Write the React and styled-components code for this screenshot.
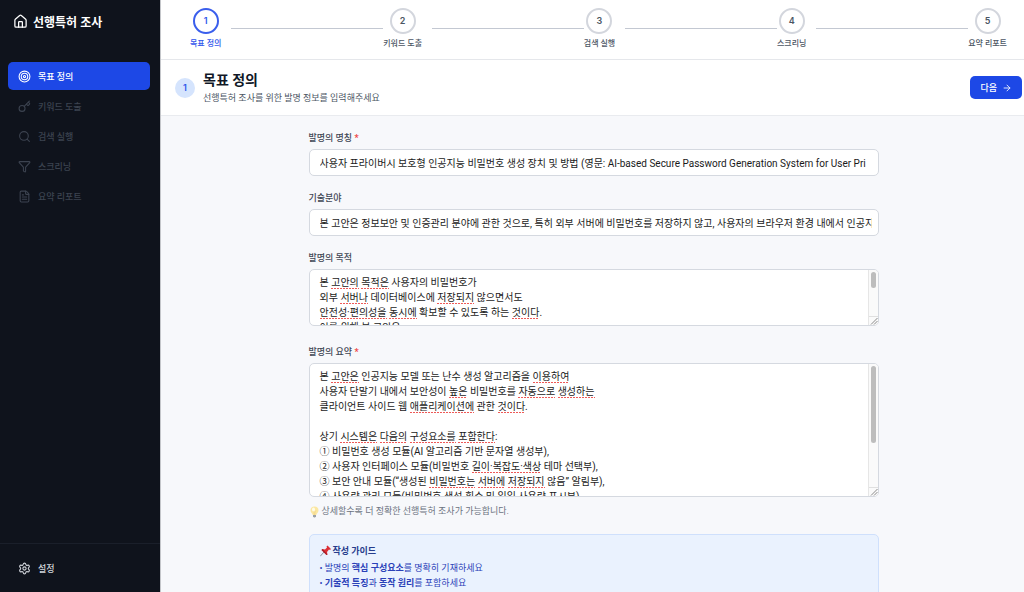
import React, { useLayoutEffect, useRef, useState } from "react";
import styled, { createGlobalStyle, css } from "styled-components";
import {
  ArrowRight,
  FileText,
  Funnel,
  House,
  Key,
  Search,
  Settings,
  Target,
} from "lucide-react";

const GlobalStyle = createGlobalStyle`
  * {
    box-sizing: border-box;
  }
  body {
    margin: 0;
    font-family: Roboto, "Noto Sans CJK KR", sans-serif;
    -webkit-font-smoothing: antialiased;
  }
  h1, h2, h3, p, ul, ol {
    margin: 0;
    padding: 0;
  }
  ul, ol {
    list-style: none;
  }
  button, input, textarea {
    font-family: inherit;
  }
`;

const steps = [
  { id: 1, label: "목표 정의", icon: Target },
  { id: 2, label: "키워드 도출", icon: Key },
  { id: 3, label: "검색 실행", icon: Search },
  { id: 4, label: "스크리닝", icon: Funnel },
  { id: 5, label: "요약 리포트", icon: FileText },
];

// words in [brackets] get the spelling underline
const purposeText = `본 [고안의] [목적은] 사용자의 비밀번호가
외부 [서버나] 데이터베이스에 [저장되지] 않으면서도
[안전성·편의성을] [동시에] 확보할 수 있도록 하는 [것이다].
이를 위해 본 고안은




`;

const summaryText = `본 [고안은] 인공지능 모델 또는 난수 생성 알고리즘을 [이용하여]
사용자 단말기 내에서 보안성이 [높은] 비밀번호를 [자동으로] [생성하는]
클라이언트 사이드 웹 [애플리케이션에] 관한 [것이다].

상기 [시스템은] [다음의] [구성요소를] [포함한다]:
① 비밀번호 생성 모듈(AI 알고리즘 기반 문자열 생성부),
② 사용자 인터페이스 모듈(비밀번호 [길이·복잡도·색상] 테마 선택부),
③ 보안 안내 모듈(“생성된 [비밀번호는] [서버에] [저장되지] 않음” 알림부),
④ 사용량 관리 모듈(비밀번호 생성 횟수 및 일일 사용량 표시부)



`;

const Layout = styled.div`
  display: flex;
  height: 100vh;
  overflow: hidden;
`;

const Sidebar = styled.aside`
  display: flex;
  flex-direction: column;
  flex: none;
  width: 161px;
  background-color: #0f131c;
  border-right: 1px solid #c4c6ca;
`;

const Brand = styled.h1`
  display: flex;
  align-items: center;
  gap: 5px;
  height: 43px;
  padding: 0 13px;
  color: #ffffff;
  font-size: 12px;
  font-weight: 700;
`;

const Nav = styled.nav`
  display: flex;
  flex-direction: column;
  flex: 1;
  gap: 2px;
  padding: 19px 10px 0 8px;
`;

const NavButton = styled.button`
  display: flex;
  align-items: center;
  gap: 7px;
  height: 28px;
  padding: 0 10px;
  border: none;
  border-radius: 5px;
  background-color: transparent;
  color: ${(props) => (props.$bright ? "#d1d5db" : "#3c4350")};
  font-size: 9px;
  font-weight: 500;
  text-align: left;
  ${(props) =>
    props.$active &&
    css`
      background-color: #1d48e6;
      color: #ffffff;
    `}
`;

const SidebarFooter = styled.div`
  display: flex;
  flex-direction: column;
  padding: 10px 10px 10px 8px;
  border-top: 1px solid #1a1f2a;
`;

const Main = styled.main`
  display: flex;
  flex-direction: column;
  flex: 1;
  min-width: 0;
  background-color: #f7f8fb;
`;

const Stepper = styled.ol`
  display: flex;
  align-items: flex-start;
  padding: 8px 17px 9px 29px;
  background-color: #ffffff;
  border-bottom: 1px solid #e5e7eb;
`;

const Step = styled.li`
  display: flex;
  flex-direction: column;
  align-items: center;
  gap: 4px;
  color: ${(props) => (props.$active ? "#2f55eb" : "#4b5563")};
  font-size: 8px;
  font-weight: 500;
  line-height: 12px;
`;

const StepCircle = styled.span`
  display: flex;
  align-items: center;
  justify-content: center;
  width: 26px;
  height: 26px;
  border: 2px solid ${(props) => (props.$active ? "#3a5eec" : "#d3d6dd")};
  border-radius: 50%;
  font-family: Inter, sans-serif;
  font-size: 9px;
  font-weight: 600;
`;

const StepLine = styled.li`
  flex: 1;
  height: 1px;
  margin: 20px 0 0 10px;
  background-color: #c3c8d2;
`;

const PageHeader = styled.header`
  display: flex;
  align-items: center;
  gap: 8px;
  height: 56px;
  padding: 0 2px 0 14px;
  background-color: #ffffff;
  border-bottom: 1px solid #e9ebef;
`;

const Badge = styled.span`
  display: flex;
  align-items: center;
  justify-content: center;
  width: 20px;
  height: 20px;
  border-radius: 50%;
  background-color: #d5e4fd;
  color: #2f55eb;
  font-family: Inter, sans-serif;
  font-size: 9px;
  font-weight: 600;
`;

const Heading = styled.div`
  flex: 1;
`;

const Title = styled.h2`
  color: #111827;
  font-size: 14px;
  font-weight: 700;
  line-height: 21px;
`;

const Subtitle = styled.p`
  color: #4b5563;
  font-size: 9px;
  line-height: 15px;
`;

const NextButton = styled.button`
  display: flex;
  align-items: center;
  gap: 5px;
  height: 23px;
  padding: 0 10px;
  border: none;
  border-radius: 5px;
  background-color: #1d48e6;
  color: #ffffff;
  font-size: 9px;
  font-weight: 500;
`;

const Content = styled.div`
  flex: 1;
  min-height: 0;
  overflow-y: auto;
  scrollbar-width: none;
  padding: 16px 0 16px 2px;
`;

const Form = styled.form`
  display: flex;
  flex-direction: column;
  gap: 16px;
  width: 100%;
  max-width: 570px;
  margin: 0 auto;
`;

const Field = styled.div`
  display: flex;
  flex-direction: column;
  gap: 5px;
  padding-bottom: ${(props) => (props.$roomy ? "4px" : "0")};
`;

const Label = styled.label`
  color: #3f4754;
  font-size: 9px;
  font-weight: 500;
  line-height: 12px;
`;

const Required = styled.span`
  color: #ef4444;
  font-weight: 700;
`;

const TextInput = styled.input`
  width: 100%;
  height: 27px;
  padding: 0 6px 0 10px;
  border: 1px solid #d5d9e0;
  border-radius: 5px;
  background-color: #ffffff;
  color: #1a1a1a;
  font-size: 10px;
`;

const Editor = styled.div`
  display: grid;
  grid-template-columns: minmax(0, 1fr) 10px;
  grid-template-rows: minmax(0, 1fr);
  height: ${(props) => props.$height};
  border: 1px solid #d5d9e0;
  border-radius: 5px;
  background-color: #ffffff;
  overflow: hidden;
`;

const editorText = css`
  grid-area: 1 / 1;
  min-width: 0;
  min-height: 0;
  padding: 5px 10px;
  font-size: 10px;
  line-height: 15px;
  white-space: pre-wrap;
  scrollbar-width: none;
`;

const SpellLayer = styled.div`
  ${editorText}
  overflow: hidden;
`;

const Misspelled = styled.span`
  padding-bottom: 1px;
  background: repeating-linear-gradient(
      to right,
      #ee5a58 0 2px,
      transparent 2px 3px
    )
    left bottom / 100% 1px no-repeat;
`;

const Unseen = styled.span`
  visibility: hidden;
`;

const TextArea = styled.textarea`
  ${editorText}
  width: 100%;
  height: 100%;
  border: none;
  outline: none;
  background-color: transparent;
  color: #1a1a1a;
  overflow-y: scroll;
  resize: none;
`;

const ScrollRail = styled.div`
  display: flex;
  flex-direction: column;
  grid-area: 1 / 2;
  border-left: 1px solid #e6e6e6;
  background-color: #fafafa;
`;

const ScrollTrack = styled.div`
  flex: 1;
  min-height: 0;
  padding: 2px;
`;

const ScrollThumb = styled.div`
  width: 5px;
  border-radius: 3px;
  background-color: #bdbdbd;
`;

const ResizeCorner = styled.div`
  display: flex;
  align-items: flex-end;
  justify-content: flex-end;
  height: 9px;
  border-top: 1px solid #e0e0e0;
`;

const Hint = styled.p`
  display: flex;
  align-items: center;
  gap: 2px;
  padding-top: 3px;
  color: #6b7280;
  font-size: 9px;
  line-height: 13px;
`;

const Guide = styled.section`
  padding: 9px 10px;
  border: 1px solid #cfe0fc;
  border-radius: 5px;
  background-color: #eaf2fe;
  color: #2a41b8;
  font-size: 9px;
  line-height: 15px;
`;

const GuideTitle = styled.h3`
  display: flex;
  align-items: center;
  gap: 2px;
  margin-bottom: 3px;
  color: #263c8c;
  font-size: 9px;
  font-weight: 600;
  line-height: 14px;
`;

const BulbIcon = () => (
  <svg width="11" height="12" viewBox="0 0 22 24" aria-hidden="true">
    <path d="M11 1a8 8 0 0 0-8 8c0 4 4 6 4.500 9h7C15 15 19 13 19 9a8 8 0 0 0-8-8z" fill="#fbe7a2" />
    <path d="M8 9l2 3v5h2v-5l2-3" fill="none" stroke="#efcf7c" strokeWidth="1" />
    <ellipse cx="9" cy="7" rx="3" ry="4" fill="#fffbe6" />
    <path d="M8 18h6v3l-2 2h-2l-2-2z" fill="#9aa0a8" />
  </svg>
);

const PinIcon = () => (
  <svg width="11" height="12" viewBox="0 0 22 24" aria-hidden="true">
    <path d="M8 14L1 22" stroke="#8b93a0" strokeWidth="2" strokeLinecap="round" />
    <path d="M13 3l2-2 7 7-2 2-2-1-4 5 1 5-2 1L3 10l2-2 5 1 4-4z" fill="#dc2f35" />
    <path d="M5 8l10 11-2 1L3 10z" fill="#a91d28" />
  </svg>
);

const SpellEditor = ({ id, text, height }) => {
  const [value, setValue] = useState(text.replace(/[[\]]/g, ""));
  const [edited, setEdited] = useState(false);
  const [thumb, setThumb] = useState({ size: 0, top: 0 });
  const layer = useRef(null);
  const area = useRef(null);

  const measure = () => {
    const { clientHeight, scrollHeight, scrollTop } = area.current;
    const track = clientHeight - 13;
    setThumb({
      size: Math.round((track * clientHeight) / scrollHeight),
      top: Math.round((track * scrollTop) / scrollHeight),
    });
  };

  useLayoutEffect(measure, [value]);

  const handleChange = (e) => {
    setValue(e.target.value);
    setEdited(true);
  };

  const handleScroll = (e) => {
    if (layer.current) layer.current.scrollTop = e.target.scrollTop;
    measure();
  };

  return (
    <Editor $height={height}>
      {!edited && (
        <SpellLayer ref={layer} aria-hidden="true">
          {text.split(/[[\]]/).map((part, i) =>
            i % 2 ? (
              <Misspelled key={i}>
                <Unseen>{part}</Unseen>
              </Misspelled>
            ) : (
              <Unseen key={i}>{part}</Unseen>
            )
          )}
        </SpellLayer>
      )}
      <TextArea
        id={id}
        ref={area}
        value={value}
        spellCheck={false}
        onChange={handleChange}
        onScroll={handleScroll}
      />
      <ScrollRail aria-hidden="true">
        <ScrollTrack>
          <ScrollThumb style={{ height: thumb.size, marginTop: thumb.top }} />
        </ScrollTrack>
        <ResizeCorner>
          <svg width="8" height="8" viewBox="0 0 8 8">
            <path d="M1 7.500L7.500 1M4 7.500L7.500 4" stroke="#8a8a8a" fill="none" />
          </svg>
        </ResizeCorner>
      </ScrollRail>
    </Editor>
  );
};

const App = () => {
  const [current, setCurrent] = useState(1);

  return (
    <>
      <GlobalStyle />
      <Layout>
        <Sidebar>
          <Brand>
            <House size={15} />
            선행특허 조사
          </Brand>
          <Nav>
            {steps.map(({ id, label, icon: Icon }) => (
              <NavButton
                key={id}
                type="button"
                $active={id === current}
                onClick={() => setCurrent(id)}
              >
                <Icon size={13} />
                {label}
              </NavButton>
            ))}
          </Nav>
          <SidebarFooter>
            <NavButton type="button" $bright>
              <Settings size={13} />
              설정
            </NavButton>
          </SidebarFooter>
        </Sidebar>

        <Main>
          <Stepper>
            {steps.map(({ id, label }) => (
              <React.Fragment key={id}>
                {id > 1 && <StepLine aria-hidden="true" />}
                <Step $active={id === current}>
                  <StepCircle $active={id === current}>{id}</StepCircle>
                  {label}
                </Step>
              </React.Fragment>
            ))}
          </Stepper>

          <PageHeader>
            <Badge>1</Badge>
            <Heading>
              <Title>목표 정의</Title>
              <Subtitle>선행특허 조사를 위한 발명 정보를 입력해주세요</Subtitle>
            </Heading>
            <NextButton type="button">
              다음
              <ArrowRight size={10} />
            </NextButton>
          </PageHeader>

          <Content>
            <Form>
              <Field>
                <Label htmlFor="title">
                  발명의 명칭 <Required>*</Required>
                </Label>
                <TextInput
                  id="title"
                  defaultValue="사용자 프라이버시 보호형 인공지능 비밀번호 생성 장치 및 방법 (영문: AI-based Secure Password Generation System for User Pri"
                />
              </Field>
              <Field>
                <Label htmlFor="field">기술분야</Label>
                <TextInput
                  id="field"
                  defaultValue="본 고안은 정보보안 및 인증관리 분야에 관한 것으로, 특히 외부 서버에 비밀번호를 저장하지 않고, 사용자의 브라우저 환경 내에서 인공지능"
                />
              </Field>
              <Field $roomy>
                <Label htmlFor="purpose">발명의 목적</Label>
                <SpellEditor id="purpose" text={purposeText} height="57px" />
              </Field>
              <Field>
                <Label htmlFor="summary">
                  발명의 요약 <Required>*</Required>
                </Label>
                <SpellEditor id="summary" text={summaryText} height="134px" />
                <Hint>
                  <BulbIcon />
                  상세할수록 더 정확한 선행특허 조사가 가능합니다.
                </Hint>
              </Field>
              <Guide>
                <GuideTitle>
                  <PinIcon />
                  작성 가이드
                </GuideTitle>
                <ul>
                  <li>
                    • 발명의 <strong>핵심 구성요소</strong>를 명확히 기재하세요
                  </li>
                  <li>
                    • <strong>기술적 특징</strong>과 <strong>동작 원리</strong>를
                    포함하세요
                  </li>
                </ul>
              </Guide>
            </Form>
          </Content>
        </Main>
      </Layout>
    </>
  );
};

export default App;
